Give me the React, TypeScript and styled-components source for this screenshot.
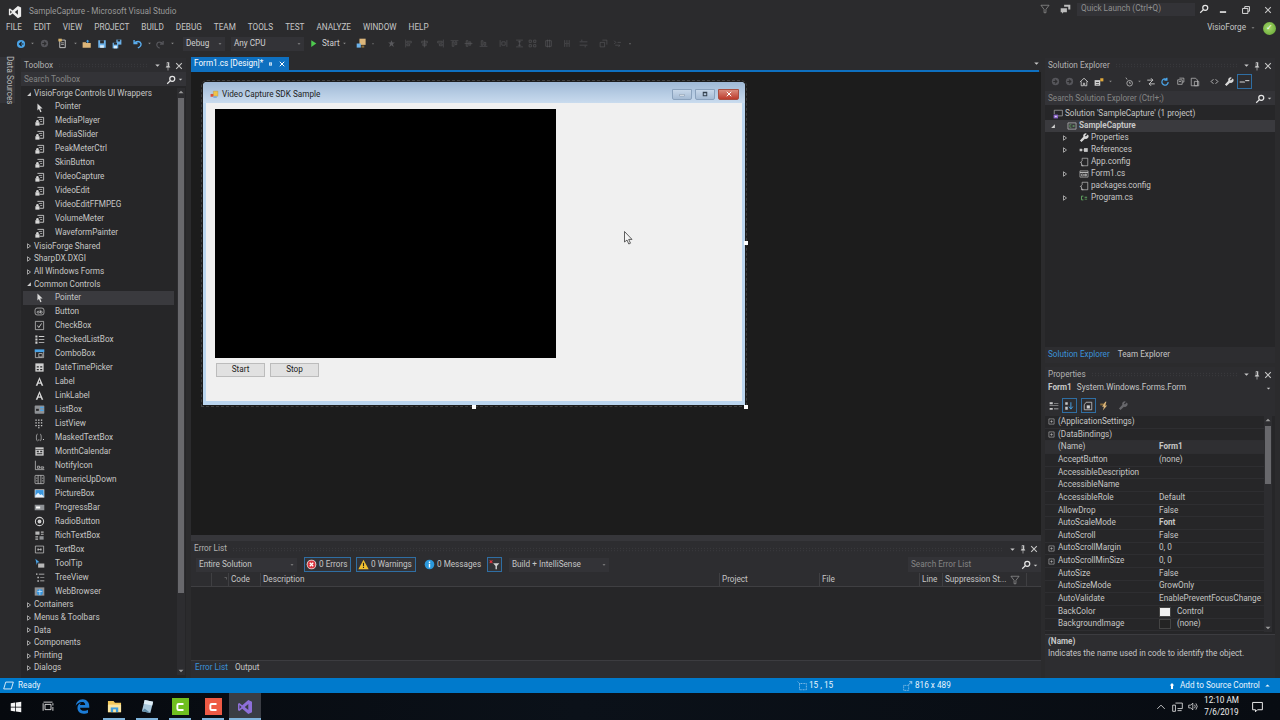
import React from 'react'
import styled, { createGlobalStyle } from 'styled-components'
import { FaEdgeLegacy } from 'react-icons/fa6'

const GlobalStyle = createGlobalStyle`
  html, body { margin: 0; padding: 0; background: #2b2b2d; }
  * { box-sizing: border-box; }
`

const FONT = `Roboto, "Noto Sans", "Liberation Sans", sans-serif`

const Shell = styled.div`
  width: 1280px;
  height: 720px;
  overflow: hidden;
  display: flex;
  flex-direction: column;
  background: #2b2b2d;
  color: #c6c6c6;
  font-family: ${FONT};
  font-size: 8.2px;
  line-height: 1.2;
  white-space: nowrap;
`

/* ---------- icons ---------- */
const Svg = styled.svg<{ $s: number; $ml?: number }>`
  width: ${(p) => p.$s}px;
  height: ${(p) => p.$s}px;
  flex: none;
  display: block;
  margin-left: ${(p) => p.$ml ?? 0}px;
`

const G = '#c8c8c8'
const DIM = '#5c5c60'
const BLUE = '#4aa3e6'
const YEL = '#dcb67a'

const shapes: Record<string, React.ReactNode> = {
  caret: <path d="M4 6h8l-4 4z" fill={G} />,
  caretUp: <path d="M3 10.500h10L8 5.500z" fill="#9a9a9a" />,
  caretDown: <path d="M3 5.500h10l-5 5z" fill="#9a9a9a" />,
  caretWhite: <path d="M3 10.500h10L8 5.500z" fill="#f0f8fe" />,
  caretDim: <path d="M5 6.500h6l-3 3z" fill="#8a8a8a" />,
  treeOpen: <path d="M13 3v10H3z" fill="#d0d0d0" />,
  treeShut: <path d="M4 2l8 6-8 6z" fill="none" stroke="#c8c8c8" strokeWidth="2" />,
  pin: <path d="M6 2h4v6l1.500 1.500v1h-3V15h-1v-4.500h-3v-1L6 8zM7 3v5h1V3z" fill={G} />,
  pinSide: <path d="M2 8h4V5h6v6H6V8M7 7v2h4V7z" fill="#ffffff" />,
  close: <path d="M3.500 3.500l9 9m0-9l-9 9" stroke={G} strokeWidth="1.700" />,
  closeWhite: <path d="M3.500 3.500l9 9m0-9l-9 9" stroke="#fff" strokeWidth="2" />,
  capMin: <path d="M3 9h10v3H3z" fill="#e8eef5" stroke="#6d7f93" strokeWidth=".8" />,
  capMax: <path d="M3.500 3.500h9v9h-9zM5.500 6.500h5v4h-5z" fill="#33404e" fillRule="evenodd" />,
  search: (
    <g fill="none" stroke="#e6e6e6" strokeWidth="2">
      <circle cx="10" cy="6" r="4" />
      <path d="M7 9l-5 5" />
    </g>
  ),
  funnel: <path d="M1.500 2h13L9.500 8.500V14h-3V8.500z" fill="none" stroke="#9a9a9a" strokeWidth="1.100" />,
  feedback: (
    <g fill="#bdbdbd">
      <path d="M6 1h9v7h-3v-4H6z" />
      <path d="M1 6h9v6H5l-2 2v-2H1z" />
    </g>
  ),
  minimize: <path d="M3 10h10v2.500H3z" fill="#f0f0f0" />,
  restore: (
    <g fill="none" stroke="#f0f0f0" strokeWidth="1.400">
      <path d="M6 5V2.500h7.500V10H11" />
      <path d="M2.500 5.500H11V13.500H2.500z" />
    </g>
  ),
  back: (
    <g>
      <circle cx="8" cy="8" r="6.500" fill={BLUE} />
      <path d="M9 4.500L5.500 8 9 11.500M5.500 8H12" stroke="#1e1e1e" strokeWidth="1.800" fill="none" />
    </g>
  ),
  fwd: (
    <g>
      <circle cx="8" cy="8" r="6.500" fill="#55555a" />
      <path d="M7 4.500L10.500 8 7 11.500M10.500 8H4" stroke="#2b2b2d" strokeWidth="1.800" fill="none" />
    </g>
  ),
  newItem: (
    <g>
      <path d="M4 3h8v11H4z" fill="none" stroke="#d0d0d0" strokeWidth="1.300" />
      <path d="M2 1h5v4H2z" fill="#d7b36a" />
      <path d="M6 7h4M6 9.500h4" stroke="#d0d0d0" />
    </g>
  ),
  open: (
    <g>
      <path d="M1 5h5l1 1.500h7V14H1z" fill={YEL} />
      <path d="M9 1l3 3H10v2H8V4H6z" fill={BLUE} />
    </g>
  ),
  formIcon: (
    <g>
      <path d="M6 2h8v9H6z" fill="#f0c24a" stroke="#a88a2e" strokeWidth=".6" />
      <path d="M1 7h5v5H1z" fill="#d8513f" />
      <path d="M6 11h6v3H6z" fill="#7aa6d6" />
    </g>
  ),
  save: (
    <g>
      <path d="M2 2h12v12H2z" fill="#6cb2ea" />
      <path d="M5 2h6v5H5z" fill="#2b2b2d" />
      <path d="M5 10h6v4H5z" fill="#d8ecfa" />
    </g>
  ),
  saveAll: (
    <g>
      <path d="M7 1h8v8H7z" fill="#6cb2ea" />
      <path d="M9 1h4v3H9z" fill="#2b2b2d" />
      <path d="M1 6h9v9H1z" fill="#6cb2ea" />
      <path d="M3 6h5v3H3z" fill="#2b2b2d" />
      <path d="M3 11h5v4H3z" fill="#d8ecfa" />
    </g>
  ),
  undo: <path d="M3 3v5h5M3.500 8C6 4 12 4 13 8c.7 3-2 5.500-4.500 6.500" fill="none" stroke="#5aaef0" strokeWidth="2" />,
  redo: <path d="M13 3v5H8M12.500 8C10 4 4 4 3 8c-.7 3 2 5.500 4.500 6.500" fill="none" stroke="#55555a" strokeWidth="2" />,
  play: <path d="M4 2l9 6-9 6z" fill="#4ec94e" />,
  findFolder: (
    <g>
      <path d="M5 1h9v9H5z" fill={YEL} />
      <path d="M1 8h6v6H1z" fill="#6cb2ea" />
      <path d="M8 11h4v3H8z" fill="#8a6d3b" />
    </g>
  ),
  star: <path d="M8 2l1.800 4H14l-3.500 2.800L12 14 8 11l-4 3 1.500-5.200L2 6h4.200z" fill="#58585c" />,
  alignA: <path d="M3 1v14M5 4h8v3H5zM5 9h5v3H5z" fill="none" stroke={DIM} />,
  alignB: <path d="M8 1v14M3 4h10v3H3zM5 9h6v3H5z" fill="none" stroke={DIM} />,
  alignC: <path d="M13 1v14M3 4h8v3H3zM6 9h5v3H6z" fill="none" stroke={DIM} />,
  alignD: <path d="M1 3h14M4 5v8h3V5zM9 5v5h3V5z" fill="none" stroke={DIM} />,
  alignE: <path d="M1 8h14M4 3v10h3V3zM9 5v6h3V5z" fill="none" stroke={DIM} />,
  alignF: <path d="M1 13h14M4 3v8h3V3zM9 6v5h3V6z" fill="none" stroke={DIM} />,
  sizeA: <path d="M2 2v12M14 2v12M5 5h6v6H5z" fill="none" stroke={DIM} />,
  sizeB: <path d="M2 2h12M2 14h12M8 3v10M5 5h6M5 11h6" fill="none" stroke={DIM} />,
  sizeC: <path d="M2 2h4v4H2zM10 2h4v4h-4zM2 10h4v4H2zM10 10h4v4h-4z" fill="none" stroke={DIM} />,
  sizeD: <path d="M3 3h10v10H3zM6 1v14M10 1v14" fill="none" stroke={DIM} />,
  spaceA: <path d="M3 2v12M7 2v12M11 2v12M4 8h2M8 8h2" fill="none" stroke={DIM} />,
  spaceB: <path d="M1 5h14M1 11h14M5 1v3M11 12v3" fill="none" stroke={DIM} />,
  order: <path d="M2 6h8v8H2zM6 2h8v8" fill="none" stroke={DIM} />,
  tabOrder: <path d="M2 3l3 3-3 3M8 6h6M4 11h8l-2 3" fill="none" stroke={DIM} />,
  comp: (
    <g>
      <path d="M5 2h9v10H8" fill="none" stroke="#d8d8d8" strokeWidth="1.200" />
      <path d="M7 5h5M9 8h3" stroke="#d8d8d8" />
      <path d="M2 9h6v5H2z" fill="#d8d8d8" />
      <circle cx="5" cy="7.500" r="1.800" fill="#d8d8d8" />
    </g>
  ),
  pointer: <path d="M5 2l7.500 7.500H9l2 4.500-1.800.8-2-4.500L5 12.500z" fill="#d8d8d8" />,
  button: (
    <g>
      <rect x="1.500" y="3" width="13" height="10" rx="3" fill="none" stroke="#d0d0d0" />
      <circle cx="6" cy="9" r="1.500" fill="none" stroke="#d0d0d0" />
      <path d="M9 5.500V10.500M9 9a1.500 1.500 0 103 0 1.500 1.500 0 10-3 0" fill="none" stroke="#d0d0d0" />
    </g>
  ),
  check: (
    <g fill="none" stroke="#d0d0d0">
      <path d="M2 2h12v12H2z" />
      <path d="M5 8l2 3 4-6" strokeWidth="1.300" />
    </g>
  ),
  checkList: (
    <g fill="#d0d0d0">
      <path d="M2 2h3v3H2zM2 6.500h3v3H2zM2 11h3v3H2z" />
      <path d="M7 3h8v1.200H7zM7 7.500h8v1.200H7zM7 12h8v1.200H7z" />
    </g>
  ),
  combo: (
    <g>
      <path d="M1 2h14v4H1z" fill={BLUE} />
      <path d="M2 6v8h12V6M7 8h5v5H7z" fill="none" stroke="#d0d0d0" />
    </g>
  ),
  date: (
    <g>
      <path d="M2 2h12v12H2z" fill="#d0d0d0" />
      <path d="M4 6h3v2H4zM9 6h3v2H9zM4 10h3v2H4zM9 10h3v2H9z" fill="#2b2b2d" />
    </g>
  ),
  label: <path d="M8 1.500L13.500 14H11l-1-2.800H6L5 14H2.500zM8 5.500L6.800 9.300h2.400z" fill="#d8d8d8" />,
  listbox: (
    <g>
      <rect x="1" y="2" width="14" height="12" rx="1" fill="#8f9296" />
      <path d="M9 4h5v2H9zM9 8h5v2H9z" fill={BLUE} />
      <path d="M3 7h4v3H3z" fill="#2b2b2d" />
    </g>
  ),
  listview: (
    <g fill="#d0d0d0">
      <path d="M2 2h2v2H2zM6 2h2v2H6zM10 2h2v2h-2zM2 6h2v2H2zM6 6h2v2H6zM10 6h2v2h-2zM2 10h2v2H2zM6 10h2v2H6zM10 10h2v2h-2zM6 13.500h2v1.500H6z" />
    </g>
  ),
  masked: (
    <g fill="none" stroke="#d0d0d0">
      <path d="M5 3C3 3 3 13 5 13M9 3c2 0 2 10 0 10" />
      <path d="M7 11v1.500M13 11h1.500" strokeWidth="1.500" />
    </g>
  ),
  calendar: (
    <g>
      <path d="M2 2h12v12H2z" fill="#d0d0d0" />
      <path d="M2 5h12" stroke="#2b2b2d" />
      <path d="M4 7h3v2H4zM9 7h3v2H9zM4 10.500h8v1.500H4z" fill="#2b2b2d" />
    </g>
  ),
  notify: <path d="M2 1v13h13M5 9h3v3H5zM10 10h4v2h-4z" fill="none" stroke="#d0d0d0" />,
  numeric: (
    <g fill="none" stroke="#d0d0d0">
      <rect x="1.500" y="2" width="13" height="12" rx="1" />
      <path d="M6 2v12M10 2v12" />
      <path d="M3 6h2M3 10h2M11.500 6h2M11.500 10h2" />
    </g>
  ),
  picture: (
    <g>
      <path d="M1 2h14v12H1z" fill="#e8e8e8" />
      <path d="M2 3h12v10H2z" fill="#3a96dd" />
      <path d="M2 11l4-4 3 3 2-1 3 3v1H2z" fill="#e8f4ff" />
    </g>
  ),
  progress: (
    <g>
      <path d="M1 4h14v8H1z" fill="#8f9296" />
      <path d="M3 6.500h6v3H3z" fill="#fff" />
    </g>
  ),
  radio: (
    <g>
      <circle cx="8" cy="8" r="6" fill="none" stroke="#d0d0d0" strokeWidth="1.500" />
      <circle cx="8" cy="8" r="2.800" fill="#d0d0d0" />
    </g>
  ),
  rich: (
    <g fill="#b8b8b8">
      <path d="M2 2h6v5H2zM10 2h4v2h-4zM10 5.500h4v1.500h-4zM2 9h4v2H2zM2 12.500h4V14H2z" />
      <path d="M8 9h6v5H8z" fill="#8f9296" />
    </g>
  ),
  textbox: (
    <g fill="none" stroke="#d0d0d0">
      <path d="M2 3h12v10H2z" />
      <path d="M5 8h6M6 6v4M10 6v4" />
    </g>
  ),
  tooltip: (
    <g>
      <path d="M2 1l6 5-3 .5L4 10z" fill={BLUE} />
      <path d="M6 8h9v6H6z" fill="#b8b8b8" />
    </g>
  ),
  treeview: (
    <g fill="#d0d0d0">
      <path d="M3 2h2v2H3zM7 2.500h8v1H7zM5 7h2v2H5zM9 7.500h6v1H9zM5 12h2v2H5zM9 12.500h6v1H9z" />
    </g>
  ),
  web: (
    <g>
      <path d="M1 2h14v12H1z" fill="#8f9296" />
      <circle cx="8.500" cy="9" r="4.500" fill="#3a96dd" />
      <path d="M5 8h7M8.500 5v8" stroke="#d8ecfa" />
    </g>
  ),
  home: <path d="M1.500 8L8 2l6.500 6M3.500 7v7h3.500v-4h2v4h3.500V7" fill="none" stroke="#d8d8d8" strokeWidth="1.300" />,
  switchView: (
    <g>
      <path d="M1 5h9v9H1z" fill="#d0d0d0" />
      <path d="M3 8h5v1H3zM3 11h5v1H3z" fill="#2b2b2d" />
      <path d="M10 2h5v5h-5z" fill="#e0a83a" />
    </g>
  ),
  pending: (
    <g fill="none" stroke="#c8c8c8" strokeWidth="1.200">
      <circle cx="9" cy="10" r="4.500" />
      <path d="M9 7.500V10h2M3 1l2 3" />
    </g>
  ),
  sync: <path d="M2 5h9M8 2l3 3-3 3M14 11H5M8 8l-3 3 3 3" fill="none" stroke="#d0d0d0" strokeWidth="1.400" />,
  refresh: <path d="M13 8a5 5 0 11-2-4M11 1v4H7" fill="none" stroke={BLUE} strokeWidth="2" />,
  collapse: <path d="M6 2h8v7h-3M3 5h8v8H3zM5 8h4" fill="none" stroke="#c8c8c8" strokeWidth="1.200" />,
  showAll: <path d="M2 2h7l3 3v9H2zM7 7h7v7H7z" fill="none" stroke="#b8b8b8" strokeWidth="1.200" />,
  code: <path d="M6 4L2 8l4 4M10 4l4 4-4 4" fill="none" stroke="#d0d0d0" strokeWidth="1.500" />,
  wrench: <path d="M14 2.500l-3 3-1.500-1.500 3-3a4 4 0 00-5.500 5L1.500 12l2.500 2.500 5.500-5.500a4 4 0 004.500-6.500z" fill="#d8d8d8" />,
  preview: (
    <g>
      <path d="M1 8h7l1 1.500H1z" fill="#d8d8d8" />
      <path d="M9 6h6v1.500H9z" fill="#d8d8d8" />
    </g>
  ),
  solution: (
    <g>
      <path d="M2 2h13v9H8" fill="none" stroke="#c0c0c0" />
      <path d="M2 2v6" stroke="#c0c0c0" />
      <path d="M1 9h7v6H1z" fill="#8a63c9" />
      <path d="M3 11h3v2H3z" fill="#e0d8f0" />
    </g>
  ),
  csproj: (
    <g>
      <path d="M1.500 3h13v10h-13z" fill="none" stroke="#d0d0d0" />
      <path d="M7 6H4.500v4H7" fill="none" stroke="#6ab06a" />
      <path d="M9 7h3v2H9z" fill="#6ab06a" />
    </g>
  ),
  refs: (
    <g fill="#c8c8c8">
      <path d="M1 6h4v4H1z" />
      <path d="M5 7.500h3v1H5z" />
      <path d="M8 5h6v6H8z" />
    </g>
  ),
  config: (
    <g fill="none" stroke="#d0d0d0">
      <path d="M5 6V2h9v12H5v-2" />
      <path d="M5 6l-3 3h2v5h3" />
    </g>
  ),
  form: (
    <g fill="none" stroke="#c8c8c8">
      <path d="M1.500 3h13v10h-13z" />
      <path d="M1.500 5.500h13" strokeWidth="1.500" />
      <path d="M4 8h3v3H4zM9 8h3v1H9zM9 10h3v1H9z" />
    </g>
  ),
  cs: (
    <g>
      <path d="M7 5H4v6h3" fill="none" stroke="#62a862" strokeWidth="1.500" />
      <path d="M9 6h4v1.500H9zM9 9h4v1.500H9z" fill="#62a862" />
    </g>
  ),
  categorized: (
    <g fill="#c8c8c8">
      <path d="M1 2h5v3H1zM8 3h7v1H8zM1 7h14v1H1zM1 11h5v3H1zM8 12h7v1H8z" />
    </g>
  ),
  alpha: (
    <g>
      <path d="M2 2h4v4H2zM2 9h4v5H2z" fill="#c8c8c8" />
      <path d="M11 2v10M8 9l3 4 3-4" fill="none" stroke={BLUE} strokeWidth="1.500" />
    </g>
  ),
  propPage: (
    <g>
      <path d="M5 2h9v12H2V6z" fill="none" stroke="#d0d0d0" strokeWidth="1.200" />
      <path d="M6 7h5v5H6z" fill="#d0d0d0" />
    </g>
  ),
  bolt: (
    <g>
      <path d="M2 4h9v3H2z" fill="#8a6d3b" />
      <path d="M10 1L5 9h3l-2 6 7-8H9.500L12 1z" fill="#dcb67a" />
    </g>
  ),
  wrenchDim: <path d="M14 2.500l-3 3-1.500-1.500 3-3a4 4 0 00-5.500 5L1.500 12l2.500 2.500 5.500-5.500a4 4 0 004.500-6.500z" fill="#67676b" />,
  plusBox: (
    <g fill="none" stroke="#c8c8c8" strokeWidth="1.200">
      <path d="M2 2h12v12H2z" />
      <path d="M5 8h6M8 5v6" />
    </g>
  ),
  errorDot: (
    <g>
      <circle cx="8" cy="8" r="7" fill="#e8e8e8" />
      <circle cx="8" cy="8" r="5.800" fill="#d8353f" />
      <path d="M5.500 5.500l5 5m0-5l-5 5" stroke="#fff" strokeWidth="1.800" />
    </g>
  ),
  warnTri: (
    <g>
      <path d="M8 1l7.500 14H.5z" fill="#f2c230" />
      <path d="M7.200 5.500h1.600v5H7.200zM7.200 11.500h1.600V13H7.200z" fill="#222" />
    </g>
  ),
  infoDot: (
    <g>
      <circle cx="8" cy="8" r="7" fill="#2b98dc" />
      <path d="M7 7h2v5.500H7zM7 3.800h2v2H7z" fill="#fff" />
    </g>
  ),
  errFilter: (
    <g>
      <path d="M1 2l4 4m0-4L1 6" stroke="#d8353f" strokeWidth="1.500" />
      <path d="M6 6h9l-3.500 4v5h-2v-5z" fill="#d0d0d0" />
    </g>
  ),
  sort: <path d="M9 3h4v4" fill="none" stroke="#8a8a8a" />,
  upArrow: <path d="M8 2l4.500 5H10v7H6V7H3.500z" fill="#fff" />,
  position: (
    <g fill="none" stroke="#cfe6f8" strokeDasharray="1.500 1">
      <path d="M4 4h11v10H4zM1 1l3 3" />
    </g>
  ),
  sizeIcon: (
    <g>
      <path d="M1 7h8v8H1z" fill="none" stroke="#cfe6f8" strokeDasharray="1.500 1" />
      <path d="M9 6l5-5M10 1h4v4" fill="none" stroke="#eaf5fd" />
    </g>
  ),
  ready: <path d="M4 3h11l-3 10H1z" fill="none" stroke="#e8f4fd" strokeWidth="1.300" />,
  trayUp: <path d="M2 11l6-6 6 6" fill="none" stroke="#e8e8e8" strokeWidth="1.300" />,
  network: (
    <g fill="none" stroke="#e8e8e8" strokeWidth="1.200">
      <path d="M5 3h10v8H8" />
      <path d="M1 6h4v9H1zM8 14h6" />
    </g>
  ),
  volume: (
    <g fill="none" stroke="#e8e8e8" strokeWidth="1.100">
      <path d="M1 6h3l3-3v10l-3-3H1z" />
      <path d="M9.500 5.500a4 4 0 010 5M11.500 3.500a7 7 0 010 9" />
    </g>
  ),
  notification: <path d="M2 3h12v9H8l-2.500 2.500V12H2z" fill="none" stroke="#f0f0f0" strokeWidth="1.200" />,
  windows: <path d="M1 3l6-.9V7.500H1zM8 2l7-1v6.500H8zM1 8.500h6V14l-6-.9zM8 8.500h7V15l-7-1z" fill="#f4f4f4" />,
  taskView: (
    <g fill="none" stroke="#e4e4e4" strokeWidth="1.200">
      <path d="M4 4.500h8v7H4z" />
      <path d="M1.500 3v10M14.500 3v3M14.500 8v5M2 1.500h12" />
    </g>
  ),
  explorer: (
    <g>
      <path d="M1 2h6l1.500 2H15v10H1z" fill="#f2c85b" />
      <path d="M1 6h14v8H1z" fill="#fbe6a2" />
      <path d="M4 9h8v5H4z" fill="#3f9fe0" />
      <path d="M6.500 11h3v3h-3z" fill="#fbe6a2" />
    </g>
  ),
  notepad: (
    <g>
      <path d="M5 1l9 2-3 12-9-2z" fill="#a9c8dc" />
      <path d="M5 1l9 2-1 4-9-2z" fill="#dfeef7" />
      <path d="M2 13l3-3 6 5z" fill="#5f8ca8" />
    </g>
  ),
  camtasia: <path d="M12 4.500H6.500c-1 0-1.500.5-1.500 1.500v4c0 1 .5 1.500 1.500 1.500H12" fill="none" stroke="#fff" strokeWidth="2.200" />,
  vs: <path fillRule="evenodd" d="M11.300 1L15 2.800v10.400L11.300 15 5.300 9.700 2.300 12 1 11.300V4.700L2.300 4l3 2.300zM11.300 5L7.800 8l3.500 3zM2.500 6v4l2-2z" fill="#8e6fd8" />,
  vsWhite: <path fillRule="evenodd" d="M11.300 1L15 2.800v10.400L11.300 15 5.300 9.700 2.300 12 1 11.300V4.700L2.300 4l3 2.300zM11.300 5L7.800 8l3.500 3zM2.500 6v4l2-2z" fill="#ececec" />,
}

const Icon: React.FC<{ n: string; s?: number; ml?: number }> = ({ n, s = 10, ml }) => (
  <Svg viewBox="0 0 16 16" $s={s} $ml={ml}>
    {shapes[n]}
  </Svg>
)

/* places icons by their centre x, in flow, starting from a known x */
const strip = (from: number, items: [string, number, number?][]) => {
  let end = from
  return items.map(([n, c, s = 10], i) => {
    const ml = c - s / 2 - end
    end = c + s / 2
    return <Icon key={i} n={n} s={s} ml={ml} />
  })
}

/* ---------- title + menu ---------- */
const TitleBar = styled.div`
  height: 18px;
  display: flex;
  align-items: center;
  padding-top: 5px;
`
const Logo = styled.div`
  width: 29px;
  padding-left: 8px;
  flex: none;
`
const AppTitle = styled.div`
  color: #999;
  flex: 1;
`
const TitleRight = styled.div`
  display: flex;
  align-items: center;
  margin-top: -5px;
`
const QuickLaunch = styled.div`
  width: 118px;
  height: 13px;
  margin-left: 6px;
  background: #333337;
  color: #8f8f8f;
  display: flex;
  align-items: center;
  padding-left: 4px;
`
const WinControls = styled.div`
  width: 71px;
  display: flex;
  align-items: center;
  padding-top: 1px;
`
const MenuBar = styled.div`
  height: 18px;
  display: flex;
  align-items: center;
  gap: 12px;
  padding-left: 6px;
  padding-top: 2px;
  position: relative;
`
const Account = styled.div`
  margin-left: auto;
  display: flex;
  align-items: center;
  padding-right: 4px;
  color: #c6c6c6;
`
const Avatar = styled.div`
  width: 13px;
  height: 13px;
  border-radius: 50%;
  background: radial-gradient(circle at 45% 45%, #a5d76a, #5da12e);
  margin-left: 6px;
  display: flex;
  align-items: center;
  justify-content: center;
  color: #fff;
  font-size: 8px;
`
const ToolBar = styled.div`
  height: 17px;
  padding-bottom: 2px;
  display: flex;
  align-items: center;
`
const Combo = styled.div<{ $w: number; $ml: number }>`
  width: ${(p) => p.$w}px;
  height: 14px;
  margin-left: ${(p) => p.$ml}px;
  flex: none;
  background: #333337;
  display: flex;
  align-items: center;
  justify-content: space-between;
  padding: 0 1px 0 3px;
  color: #d0d0d0;
`
const ToolText = styled.span<{ $ml: number }>`
  width: 16px;
  flex: none;
  margin-left: ${(p) => p.$ml}px;
  color: #d0d0d0;
`

/* ---------- main ---------- */
const Main = styled.div`
  height: 625px;
  display: flex;
  padding-top: 4px;
`
const SideStrip = styled.div`
  width: 21px;
  flex: none;
  display: flex;
`
const SideTab = styled.div`
  writing-mode: vertical-rl;
  height: 46px;
  width: 15px;
  background: #333337;
  color: #b8b8b8;
  display: flex;
  align-items: center;
  justify-content: center;
  padding-left: 4px;
`
const Toolbox = styled.div`
  width: 165px;
  flex: none;
  display: flex;
  flex-direction: column;
  background: #262628;
  margin: 1px 5px 0 0;
`
const PanelTitle = styled.div`
  height: 14px;
  flex: none;
  display: flex;
  align-items: center;
  padding: 1px 2px 0 3px;
  background: #2d2d30;
  color: #b2b2b2;
`
const Grip = styled.div`
  flex: 1;
  height: 5px;
  margin: 0 5px;
  background-image: radial-gradient(#3c3c40 0.6px, transparent 0.7px);
  background-size: 3px 2.500px;
`
const SearchBox = styled.div`
  height: 14px;
  flex: none;
  display: flex;
  align-items: center;
  justify-content: space-between;
  padding: 1px 2px 0 3px;
  background: #333337;
  color: #858585;
`
const ToolIcons = styled.div`
  display: flex;
  align-items: center;
`
const ToolboxBody = styled.div`
  flex: 1;
  display: flex;
  padding-top: 1.500px;
`
const ToolList = styled.div`
  width: 153px;
  flex: none;
  padding-left: 2px;
`
const GroupRow = styled.div`
  height: 12.67px;
  display: flex;
  align-items: center;
  padding-left: 3px;
  gap: 2px;
`
const ItemRow = styled.div<{ $on?: boolean }>`
  height: 14px;
  display: flex;
  align-items: center;
  padding-left: 10.500px;
  gap: 10.500px;
  background: ${(p) => (p.$on ? '#3a3a3e' : 'transparent')};
`
const Scroll = styled.div<{ $thumb: number }>`
  width: 8px;
  flex: none;
  display: flex;
  flex-direction: column;
  align-items: center;
  background: #2d2d30;
  justify-content: space-between;
  position: relative;
  &::before {
    content: '';
    position: absolute;
    left: 1px;
    right: 1px;
    top: 10px;
    height: ${(p) => p.$thumb}px;
    background: #68686c;
  }
`
const ScrollGutter = styled.div`
  margin-left: 3px;
  display: flex;
  padding-bottom: 3px;
`

/* ---------- centre ---------- */
const Center = styled.div`
  width: 850px;
  flex: none;
  display: flex;
  flex-direction: column;
  margin-right: 4px;
`
const DocTabs = styled.div`
  height: 13px;
  flex: none;
  display: flex;
  justify-content: space-between;
  align-items: center;
`
const DocTab = styled.div`
  width: 98px;
  height: 13px;
  background: #0e70c0;
  color: #fff;
  display: flex;
  align-items: center;
  padding: 1px 3px 0;
  justify-content: space-between;
`
const DocRule = styled.div`
  height: 2px;
  flex: none;
  margin-right: 2px;
  background: #0e70c0;
`
const Surface = styled.div`
  height: 463px;
  flex: none;
  background: #1c1c1c;
  padding: 10px 0 0 12px;
  position: relative;
`
const Splitter = styled.div`
  height: 6px;
  flex: none;
  background: #36363a;
`
const FormWindow = styled.div`
  width: 542px;
  height: 323px;
  position: relative;
  display: flex;
  flex-direction: column;
  border-radius: 4px 4px 0 0;
  background: #bcd6ef;
  padding: 0 3px 4px;
  color: #1b1b1b;
  outline: 1px dashed #3e3e3e;
  outline-offset: 1px;
`
const FormCaption = styled.div`
  height: 21px;
  margin: 0 -3px;
  padding: 3px 6px 0 7px;
  border-radius: 4px 4px 0 0;
  background: linear-gradient(#9fb9d6, #c9dbee);
  display: flex;
  align-items: center;
  gap: 3px;
  flex: none;
`
const FormName = styled.div`
  flex: 1;
  padding-top: 1px;
  color: #222;
`
const CaptionBtn = styled.div<{ $w: number; $red?: boolean }>`
  width: ${(p) => p.$w}px;
  height: 11px;
  border-radius: 0 0 2px 2px;
  border: 1px solid ${(p) => (p.$red ? '#a84f42' : '#8aa2bd')};
  background: ${(p) =>
    p.$red ? 'linear-gradient(#d98a7c, #bd3b2c)' : 'linear-gradient(#c8d8ea, #a5bbd4)'};
  display: flex;
  align-items: center;
  justify-content: center;
`
const FormBody = styled.div`
  flex: 1;
  background: #f0f0f0;
  padding: 6px 0 0 9px;
`
const Video = styled.div`
  width: 341px;
  height: 249px;
  background: #000;
`
const FormButtons = styled.div`
  display: flex;
  gap: 5px;
  margin: 5px 0 0 1px;
`
const FormButton = styled.div`
  width: 49px;
  height: 14px;
  background: #e1e1e1;
  border: 1px solid #bcbcbc;
  color: #222;
  display: flex;
  align-items: center;
  justify-content: center;
`
const Handle = styled.div<{ $pos: string }>`
  position: absolute;
  width: 4px;
  height: 4px;
  background: #fff;
  ${(p) => p.$pos}
`
const Cursor = styled.svg`
  position: absolute;
  left: 433px;
  top: 159px;
  width: 9px;
  height: 14px;
`

const ErrorPanel = styled.div`
  flex: 1;
  display: flex;
  flex-direction: column;
  background: #262628;
`
const ErrTitle = styled(PanelTitle)`
  height: 15px;
  padding-top: 1px;
`
const ErrBar = styled.div`
  height: 17px;
  flex: none;
  display: flex;
  align-items: center;
  background: #2d2d30;
  padding-left: 5px;
`
const ErrCombo = styled(Combo)`
  color: #c6c6c6;
`
const FilterBtn = styled.div<{ $w: number; $ml: number; $on?: boolean }>`
  width: ${(p) => p.$w}px;
  height: 15px;
  margin-left: ${(p) => p.$ml}px;
  flex: none;
  display: flex;
  align-items: center;
  gap: 2px;
  padding-left: 1px;
  border: 1px solid ${(p) => (p.$on ? '#2f6ea3' : 'transparent')};
  background: ${(p) => (p.$on ? '#333337' : 'transparent')};
`
const ErrSearch = styled(SearchBox)`
  width: 133px;
  margin-left: auto;
  height: 15px;
`
const ColHead = styled.div`
  height: 14px;
  flex: none;
  display: flex;
  align-items: center;
  background: #2d2d30;
  border-bottom: 1px solid #3f3f42;
`
const Col = styled.div<{ $w: number; $line?: boolean }>`
  width: ${(p) => p.$w}px;
  height: 100%;
  flex: none;
  display: flex;
  align-items: center;
  padding-left: 2px;
  border-left: 1px solid ${(p) => (p.$line ? '#3f3f42' : 'transparent')};
`
const ColEnd = styled.div`
  margin-left: auto;
  padding-right: 6px;
`
const ErrBody = styled.div`
  flex: 1;
  background: #262628;
`
const BottomTabs = styled.div`
  height: 18px;
  flex: none;
  display: flex;
  align-items: center;
  background: #2d2d30;
  border-top: 1px solid #3c3c40;
  padding: 0 0 4px 4px;
  gap: 3px;
`
const BottomTab = styled.span<{ $on?: boolean }>`
  color: ${(p) => (p.$on ? '#3b92d8' : '#c6c6c6')};
  padding-right: 4px;
`

/* ---------- right ---------- */
const Right = styled.div`
  width: 230px;
  flex: none;
  display: flex;
  flex-direction: column;
  margin-top: 1px;
`
const ExplorerPanel = styled.div`
  height: 289px;
  flex: none;
  display: flex;
  flex-direction: column;
  background: #262628;
`
const SideToolBar = styled.div`
  height: 19px;
  flex: none;
  display: flex;
  align-items: center;
  background: #2d2d30;
  position: relative;
`
const ActiveBox = styled.div`
  position: absolute;
  left: 192px;
  top: 2px;
  width: 15px;
  height: 15px;
  border: 1px solid #2f6ea3;
`
const Tree = styled.div`
  padding-top: 3px;
`
const TreeRow = styled.div<{ $pad: number; $on?: boolean; $bold?: boolean }>`
  height: 12px;
  display: flex;
  align-items: center;
  padding-left: ${(p) => p.$pad}px;
  gap: 2px;
  background: ${(p) => (p.$on ? '#3a3a3e' : 'transparent')};
  font-weight: ${(p) => (p.$bold ? 700 : 400)};
`
const TreeArrow = styled.div`
  width: 10px;
  flex: none;
  margin-right: 3px;
`
const SideTabs = styled.div`
  height: 16px;
  flex: none;
  display: flex;
  align-items: center;
  padding-left: 3px;
  gap: 4px;
  background: #2d2d30;
`
const PropsPanel = styled.div`
  margin-top: 4px;
  flex: 1;
  display: flex;
  flex-direction: column;
  background: #262628;
`
const ObjectRow = styled.div`
  height: 14px;
  flex: none;
  display: flex;
  align-items: center;
  gap: 5px;
  padding: 0 3px;
  background: #2d2d30;
  justify-content: flex-start;
`
const ObjectName = styled.b`
  font-weight: 700;
`
const ObjectCaret = styled.div`
  margin-left: auto;
`
const PropBar = styled.div`
  height: 21px;
  flex: none;
  background: #2d2d30;
  display: flex;
  align-items: center;
  position: relative;
`
const PropActive = styled.div<{ $left: number }>`
  position: absolute;
  left: ${(p) => p.$left}px;
  top: 3px;
  width: 15px;
  height: 15px;
  border: 1px solid #2f6ea3;
`
const GridWrap = styled.div`
  height: 216px;
  flex: none;
  display: flex;
`
const Grid = styled.div`
  width: 219px;
  flex: none;
`
const PropRow = styled.div<{ $on?: boolean }>`
  height: 12.67px;
  display: flex;
  align-items: center;
  border-bottom: 1px solid #2e2e31;
  background: ${(p) => (p.$on ? '#2f2f32' : 'transparent')};
`
const Gutter = styled.div`
  width: 12px;
  flex: none;
  display: flex;
  justify-content: center;
  padding-left: 1px;
  margin-right: 1px;
`
const PropName = styled.div`
  width: 98px;
  flex: none;
  margin-right: 3px;
`
const PropValue = styled.div<{ $bold?: boolean }>`
  font-weight: ${(p) => (p.$bold ? 700 : 400)};
  display: flex;
  align-items: center;
  gap: 6px;
`
const Swatch = styled.div<{ $c: string }>`
  width: 12px;
  height: 10px;
  background: ${(p) => p.$c};
  border: 1px solid #444;
`
const Desc = styled.div`
  flex: 1;
  background: #2d2d30;
  border-top: 1px solid #3c3c40;
  padding: 2px 3px 0;
  margin-top: 2px;
  display: flex;
  flex-direction: column;
  gap: 2px;
`

/* ---------- status + taskbar ---------- */
const StatusBar = styled.div`
  height: 15px;
  flex: none;
  background: #007acc;
  color: #e9f5fd;
  display: flex;
  align-items: center;
  padding-left: 3px;
`
const StatusCell = styled.div<{ $w?: number; $gap?: number }>`
  display: flex;
  align-items: center;
  flex: none;
  gap: ${(p) => p.$gap ?? 2}px;
  width: ${(p) => (p.$w ? `${p.$w}px` : 'auto')};
`
const TaskBar = styled.div`
  height: 27px;
  flex: none;
  background: linear-gradient(90deg, #06090e, #0b1119 45%, #080c12);
  display: flex;
  align-items: center;
`
const TaskSlot = styled.div<{ $ml: number; $open?: boolean; $active?: boolean }>`
  width: 32px;
  height: 27px;
  flex: none;
  margin-left: ${(p) => p.$ml}px;
  display: flex;
  align-items: center;
  justify-content: center;
  position: relative;
  background: ${(p) => (p.$active ? '#3a3d44' : 'transparent')};
  &::after {
    content: '';
    position: absolute;
    bottom: 0;
    height: 2px;
    left: ${(p) => (p.$active ? 0 : 5)}px;
    right: ${(p) => (p.$active ? 0 : 5)}px;
    background: ${(p) => (p.$open ? '#7fb4dc' : 'transparent')};
  }
`
const Tile = styled.div<{ $c: string }>`
  width: 17px;
  height: 17px;
  background: ${(p) => p.$c};
  display: flex;
  align-items: center;
  justify-content: center;
`
const Tray = styled.div`
  margin-left: auto;
  padding-right: 16.500px;
  display: flex;
  align-items: center;
  color: #eee;
`
const Clock = styled.div`
  width: 46px;
  padding-top: 1px;
  display: flex;
  flex-direction: column;
  align-items: center;
  gap: 2px;
`

/* ---------- data ---------- */
const vfItems: [string, string][] = [
  ['pointer', 'Pointer'],
  ['comp', 'MediaPlayer'],
  ['comp', 'MediaSlider'],
  ['comp', 'PeakMeterCtrl'],
  ['comp', 'SkinButton'],
  ['comp', 'VideoCapture'],
  ['comp', 'VideoEdit'],
  ['comp', 'VideoEditFFMPEG'],
  ['comp', 'VolumeMeter'],
  ['comp', 'WaveformPainter'],
]
const commonItems: [string, string][] = [
  ['pointer', 'Pointer'],
  ['button', 'Button'],
  ['check', 'CheckBox'],
  ['checkList', 'CheckedListBox'],
  ['combo', 'ComboBox'],
  ['date', 'DateTimePicker'],
  ['label', 'Label'],
  ['label', 'LinkLabel'],
  ['listbox', 'ListBox'],
  ['listview', 'ListView'],
  ['masked', 'MaskedTextBox'],
  ['calendar', 'MonthCalendar'],
  ['notify', 'NotifyIcon'],
  ['numeric', 'NumericUpDown'],
  ['picture', 'PictureBox'],
  ['progress', 'ProgressBar'],
  ['radio', 'RadioButton'],
  ['rich', 'RichTextBox'],
  ['textbox', 'TextBox'],
  ['tooltip', 'ToolTip'],
  ['treeview', 'TreeView'],
  ['web', 'WebBrowser'],
]
const props: { n: string; v?: string; plus?: boolean; bold?: boolean; on?: boolean; sw?: string }[] = [
  { n: '(ApplicationSettings)', plus: true },
  { n: '(DataBindings)', plus: true },
  { n: '(Name)', v: 'Form1', bold: true, on: true },
  { n: 'AcceptButton', v: '(none)' },
  { n: 'AccessibleDescription' },
  { n: 'AccessibleName' },
  { n: 'AccessibleRole', v: 'Default' },
  { n: 'AllowDrop', v: 'False' },
  { n: 'AutoScaleMode', v: 'Font', bold: true },
  { n: 'AutoScroll', v: 'False' },
  { n: 'AutoScrollMargin', v: '0, 0', plus: true },
  { n: 'AutoScrollMinSize', v: '0, 0', plus: true },
  { n: 'AutoSize', v: 'False' },
  { n: 'AutoSizeMode', v: 'GrowOnly' },
  { n: 'AutoValidate', v: 'EnablePreventFocusChange' },
  { n: 'BackColor', v: 'Control', sw: '#f0f0f0' },
  { n: 'BackgroundImage', v: '(none)', sw: '#242424' },
]
const menus = ['FILE', 'EDIT', 'VIEW', 'PROJECT', 'BUILD', 'DEBUG', 'TEAM', 'TOOLS', 'TEST', 'ANALYZE', 'WINDOW', 'HELP']

const PanelCtl = () => (
  <ToolIcons>
    <Icon n="caret" s={9} />
    <Icon n="pin" s={10} ml={1} />
    <Icon n="close" s={10} ml={1} />
  </ToolIcons>
)
const SearchEnd = () => (
  <ToolIcons>
    <Icon n="search" s={10} />
    <Icon n="caret" s={7} ml={1} />
  </ToolIcons>
)

const App: React.FC = () => (
  <Shell>
    <GlobalStyle />
    <TitleBar>
      <Logo>
        <Icon n="vsWhite" s={14} />
      </Logo>
      <AppTitle>SampleCapture - Microsoft Visual Studio</AppTitle>
      <TitleRight>
        <Icon n="funnel" s={10} />
        <Icon n="feedback" s={11} ml={10} />
        <QuickLaunch>Quick Launch (Ctrl+Q)</QuickLaunch>
        <Icon n="search" s={10} ml={4} />
        <WinControls>
          {strip(0, [
            ['minimize', 14, 10],
            ['restore', 37, 10],
            ['close', 59, 10],
          ])}
        </WinControls>
      </TitleRight>
    </TitleBar>
    <MenuBar>
      {menus.map((m) => (
        <span key={m}>{m}</span>
      ))}
      <Account>
        VisioForge
        <Icon n="caretDim" s={8} ml={3} />
        <Avatar>✓</Avatar>
      </Account>
    </MenuBar>
    <ToolBar>
      {strip(0, [
        ['back', 21, 10],
        ['caretDim', 32, 7],
        ['fwd', 44, 9],
        ['newItem', 62, 11],
        ['caretDim', 75, 7],
        ['open', 87, 10],
        ['save', 102, 10],
        ['saveAll', 117, 10],
        ['undo', 137, 11],
        ['caretDim', 149, 7],
        ['redo', 160, 10],
        ['caretDim', 172, 7],
      ])}
      <Combo $w={42} $ml={7.500}>
        Debug
        <Icon n="caretDim" s={8} />
      </Combo>
      <Combo $w={73} $ml={6}>
        Any CPU
        <Icon n="caretDim" s={8} />
      </Combo>
      <Icon n="play" s={9} ml={5} />
      <ToolText $ml={4}>Start</ToolText>
      <Icon n="caretDim" s={7} ml={2.500} />
      <Icon n="findFolder" s={11} ml={8.500} />
      <Icon n="caretDim" s={6} ml={2.500} />
      {strip(375, [
        ['star', 391, 9],
        ['alignA', 408, 9],
        ['alignB', 424, 9],
        ['alignC', 440, 9],
        ['alignD', 454, 9],
        ['alignE', 468, 9],
        ['alignF', 483, 9],
        ['sizeA', 503, 9],
        ['sizeB', 519, 9],
        ['sizeC', 532, 9],
        ['sizeD', 548, 9],
        ['spaceA', 567, 9],
        ['spaceB', 583, 9],
        ['order', 603, 9],
        ['tabOrder', 617, 9],
        ['caretDim', 629, 6],
      ])}
    </ToolBar>
    <Main>
      <SideStrip>
        <SideTab>Data Sources</SideTab>
      </SideStrip>
      <Toolbox>
        <PanelTitle>
          Toolbox
          <Grip />
          <PanelCtl />
        </PanelTitle>
        <SearchBox>
          Search Toolbox
          <SearchEnd />
        </SearchBox>
        <ToolboxBody>
          <ToolList>
            <GroupRow>
              <Icon n="treeOpen" s={6} />
              VisioForge Controls UI Wrappers
            </GroupRow>
            {vfItems.map(([i, t], k) => (
              <ItemRow key={k}>
                <Icon n={i} s={11} />
                {t}
              </ItemRow>
            ))}
            {['VisioForge Shared', 'SharpDX.DXGI', 'All Windows Forms'].map((t) => (
              <GroupRow key={t}>
                <Icon n="treeShut" s={6} />
                {t}
              </GroupRow>
            ))}
            <GroupRow>
              <Icon n="treeOpen" s={6} />
              Common Controls
            </GroupRow>
            {commonItems.map(([i, t], k) => (
              <ItemRow key={k} $on={k === 0}>
                <Icon n={i} s={11} />
                {t}
              </ItemRow>
            ))}
            {['Containers', 'Menus & Toolbars', 'Data', 'Components', 'Printing', 'Dialogs'].map((t) => (
              <GroupRow key={t}>
                <Icon n="treeShut" s={6} />
                {t}
              </GroupRow>
            ))}
          </ToolList>
          <ScrollGutter>
            <Scroll $thumb={495}>
              <Icon n="caretUp" s={8} />
              <Icon n="caretDown" s={8} />
            </Scroll>
          </ScrollGutter>
        </ToolboxBody>
      </Toolbox>
      <Center>
        <DocTabs>
          <DocTab>
            Form1.cs [Design]*
            <ToolIcons>
              <Icon n="pinSide" s={8} />
              <Icon n="closeWhite" s={8} ml={4} />
            </ToolIcons>
          </DocTab>
          <Icon n="caret" s={9} />
        </DocTabs>
        <DocRule />
        <Surface>
          <FormWindow>
            <FormCaption>
              <Icon n="formIcon" s={9} />
              <FormName>Video Capture SDK Sample</FormName>
              <CaptionBtn $w={20}>
                <Icon n="capMin" s={8} />
              </CaptionBtn>
              <CaptionBtn $w={20}>
                <Icon n="capMax" s={8} />
              </CaptionBtn>
              <CaptionBtn $w={21} $red>
                <Icon n="closeWhite" s={8} />
              </CaptionBtn>
            </FormCaption>
            <FormBody>
              <Video />
              <FormButtons>
                <FormButton>Start</FormButton>
                <FormButton>Stop</FormButton>
              </FormButtons>
            </FormBody>
            <Handle $pos="right: -3px; top: 159px;" />
            <Handle $pos="left: 269px; bottom: -4px;" />
            <Handle $pos="right: -3px; bottom: -4px;" />
          </FormWindow>
          <Cursor viewBox="0 0 9 14">
            <path d="M.5.5v10.500l2.500-2 1.800 4 1.700-.8-1.800-3.800H8z" fill="#f4f4f4" stroke="#222" strokeWidth=".7" />
          </Cursor>
        </Surface>
        <Splitter />
        <ErrorPanel>
          <ErrTitle>
            Error List
            <Grip />
            <PanelCtl />
          </ErrTitle>
          <ErrBar>
            <ErrCombo $w={101} $ml={0}>
              Entire Solution
              <Icon n="caretDim" s={8} />
            </ErrCombo>
            <FilterBtn $w={47} $ml={7} $on>
              <Icon n="errorDot" s={11} />0 Errors
            </FilterBtn>
            <FilterBtn $w={60} $ml={5} $on>
              <Icon n="warnTri" s={11} />0 Warnings
            </FilterBtn>
            <FilterBtn $w={56} $ml={6}>
              <Icon n="infoDot" s={11} />0 Messages
            </FilterBtn>
            <FilterBtn $w={15} $ml={9} $on>
              <Icon n="errFilter" s={11} />
            </FilterBtn>
            <ErrCombo $w={100} $ml={7}>
              Build + IntelliSense
              <Icon n="caretDim" s={8} />
            </ErrCombo>
            <ErrSearch>
              Search Error List
              <SearchEnd />
            </ErrSearch>
          </ErrBar>
          <ColHead>
            <Col $w={20} />
            <Col $w={17} $line>
              <Icon n="sort" s={8} ml={6} />
            </Col>
            <Col $w={32} $line>
              Code
            </Col>
            <Col $w={459} $line>
              Description
            </Col>
            <Col $w={100} $line>
              Project
            </Col>
            <Col $w={100} $line>
              File
            </Col>
            <Col $w={23} $line>
              Line
            </Col>
            <Col $w={84} $line>
              Suppression St...
              <ColEnd>
                <Icon n="funnel" s={10} />
              </ColEnd>
            </Col>
            <Col $w={14} $line />
          </ColHead>
          <ErrBody />
          <BottomTabs>
            <BottomTab $on>Error List</BottomTab>
            <BottomTab>Output</BottomTab>
          </BottomTabs>
        </ErrorPanel>
      </Center>
      <Right>
        <ExplorerPanel>
          <PanelTitle>
            Solution Explorer
            <Grip />
            <PanelCtl />
          </PanelTitle>
          <SideToolBar>
            {strip(0, [
              ['fwd', 10, 9],
              ['fwd', 24, 9],
              ['home', 39, 10],
              ['switchView', 54, 10],
              ['caretDim', 65, 7],
              ['pending', 84, 10],
              ['caretDim', 94, 7],
              ['sync', 106, 10],
              ['refresh', 120, 10],
              ['collapse', 135, 9],
              ['showAll', 150, 10],
              ['code', 169, 9],
              ['wrench', 184, 10],
              ['preview', 199, 11],
            ])}
            <ActiveBox />
          </SideToolBar>
          <SearchBox>
            Search Solution Explorer (Ctrl+;)
            <SearchEnd />
          </SearchBox>
          <Tree>
            <TreeRow $pad={8}>
              <Icon n="solution" s={10} />
              Solution 'SampleCapture' (1 project)
            </TreeRow>
            <TreeRow $pad={5} $on $bold>
              <Icon n="treeOpen" s={6} />
              <Icon n="csproj" s={10} ml={9} />
              SampleCapture
            </TreeRow>
            {[
              ['treeShut', 'wrench', 'Properties'],
              ['treeShut', 'refs', 'References'],
              ['', 'config', 'App.config'],
              ['treeShut', 'form', 'Form1.cs'],
              ['', 'config', 'packages.config'],
              ['treeShut', 'cs', 'Program.cs'],
            ].map(([a, i, t]) => (
              <TreeRow $pad={17} key={t}>
                <TreeArrow>{a && <Icon n={a} s={6} />}</TreeArrow>
                <Icon n={i} s={10} ml={2} />
                {t}
              </TreeRow>
            ))}
          </Tree>
        </ExplorerPanel>
        <SideTabs>
          <BottomTab $on>Solution Explorer</BottomTab>
          <BottomTab>Team Explorer</BottomTab>
        </SideTabs>
        <PropsPanel>
          <PanelTitle>
            Properties
            <Grip />
            <PanelCtl />
          </PanelTitle>
          <ObjectRow>
            <ObjectName>Form1</ObjectName>
            System.Windows.Forms.Form
            <ObjectCaret>
              <Icon n="caret" s={7} />
            </ObjectCaret>
          </ObjectRow>
          <PropBar>
            {strip(0, [
              ['categorized', 9, 10],
              ['alpha', 24, 10],
              ['propPage', 43, 10],
              ['bolt', 59, 10],
              ['wrenchDim', 78, 10],
            ])}
            <PropActive $left={17} />
            <PropActive $left={36} />
          </PropBar>
          <GridWrap>
            <Grid>
              {props.map((p) => (
                <PropRow key={p.n} $on={p.on}>
                  <Gutter>{p.plus && <Icon n="plusBox" s={7} />}</Gutter>
                  <PropName>{p.n}</PropName>
                  <PropValue $bold={p.bold}>
                    {p.sw && <Swatch $c={p.sw} />}
                    {p.v}
                  </PropValue>
                </PropRow>
              ))}
            </Grid>
            <Scroll $thumb={58}>
              <Icon n="caretUp" s={8} />
              <Icon n="caretDown" s={8} />
            </Scroll>
          </GridWrap>
          <Desc>
            <ObjectName>(Name)</ObjectName>
            Indicates the name used in code to identify the object.
          </Desc>
        </PropsPanel>
      </Right>
    </Main>
    <StatusBar>
      <Icon n="ready" s={11} />
      <StatusCell $w={783}>
        <span>&nbsp;&nbsp;Ready</span>
      </StatusCell>
      <StatusCell $w={106}>
        <Icon n="position" s={10} />
        15 , 15
      </StatusCell>
      <StatusCell $w={265}>
        <Icon n="sizeIcon" s={10} />
        816 x 489
      </StatusCell>
      <StatusCell $gap={4}>
        <Icon n="upArrow" s={8} />
        Add to Source Control
        <Icon n="caretWhite" s={7} />
      </StatusCell>
    </StatusBar>
    <TaskBar>
      <TaskSlot $ml={0}>
        <Icon n="windows" s={12} />
      </TaskSlot>
      <TaskSlot $ml={0}>
        <Icon n="taskView" s={12} />
      </TaskSlot>
      <TaskSlot $ml={2}>
        <FaEdgeLegacy size={15} color="#1c7cd6" />
      </TaskSlot>
      <TaskSlot $ml={0} $open>
        <Icon n="explorer" s={15} />
      </TaskSlot>
      <TaskSlot $ml={1} $open>
        <Icon n="notepad" s={15} />
      </TaskSlot>
      <TaskSlot $ml={1} $open>
        <Tile $c="#6fbf1f">
          <Icon n="camtasia" s={14} />
        </Tile>
      </TaskSlot>
      <TaskSlot $ml={1} $open>
        <Tile $c="#ee5a45">
          <Icon n="camtasia" s={14} />
        </Tile>
      </TaskSlot>
      <TaskSlot $ml={0} $open $active>
        <Icon n="vs" s={16} />
      </TaskSlot>
      <Tray>
        <Icon n="trayUp" s={10} />
        <Icon n="network" s={11} ml={6} />
        <Icon n="volume" s={11} ml={5} />
        <Clock>
          <span>12:10 AM</span>
          <span>7/6/2019</span>
        </Clock>
        <Icon n="notification" s={13} ml={6} />
      </Tray>
    </TaskBar>
  </Shell>
)

export default App
